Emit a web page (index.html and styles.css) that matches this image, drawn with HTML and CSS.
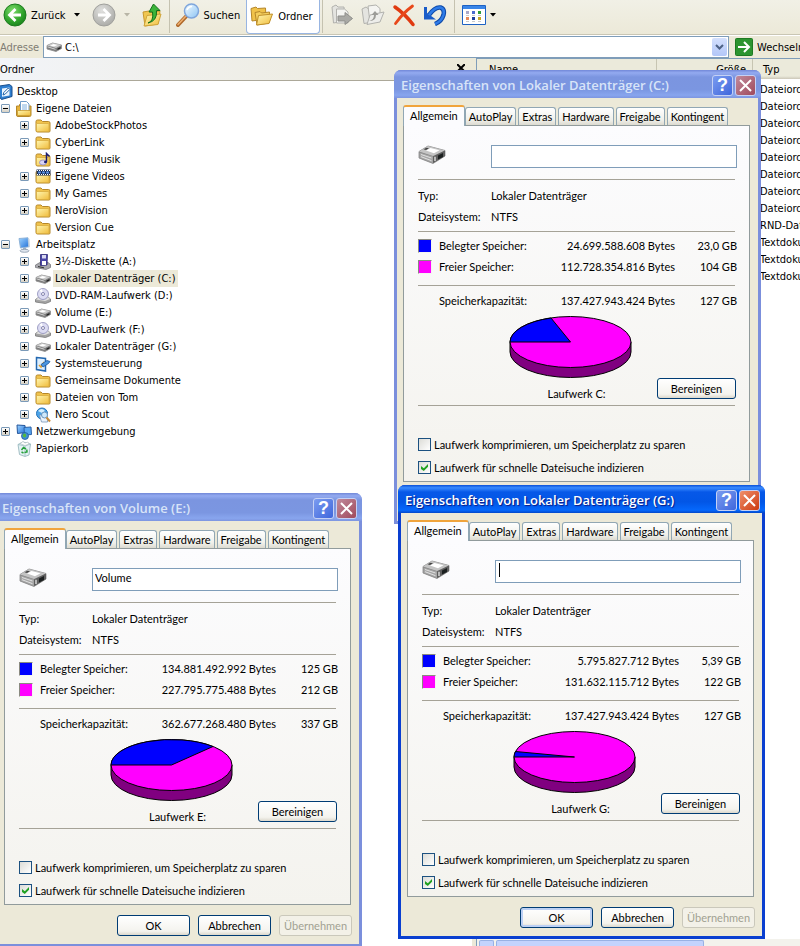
FILE: index.html
```html
<!DOCTYPE html>
<html lang="de">
<head>
    <meta charset="UTF-8">
    <meta name="viewport" content="width=device-width, initial-scale=1.0">
    <title>C:\</title>
    <link rel="stylesheet" href="styles.css">
</head>
<body>
    <!-- icon set -->
    <svg class="icon-defs" width="0" height="0" aria-hidden="true">
        <defs>
            <linearGradient id="g-folder" x1="0" y1="0" x2="1" y2="1">
                <stop offset="0" stop-color="#fff6b0"/>
                <stop offset="1" stop-color="#f0bc3c"/>
            </linearGradient>
            <radialGradient id="g-green" cx="0.4" cy="0.3" r="0.8">
                <stop offset="0" stop-color="#7fdc6c"/>
                <stop offset="0.6" stop-color="#2fa32b"/>
                <stop offset="1" stop-color="#157a18"/>
            </radialGradient>
            <radialGradient id="g-gray" cx="0.4" cy="0.3" r="0.8">
                <stop offset="0" stop-color="#e0e0de"/>
                <stop offset="1" stop-color="#a6a6a2"/>
            </radialGradient>
            <linearGradient id="g-screen" x1="0" y1="0" x2="1" y2="1">
                <stop offset="0" stop-color="#9fd4ff"/>
                <stop offset="1" stop-color="#1f6fd8"/>
            </linearGradient>
            <linearGradient id="g-glass" x1="0" y1="0" x2="1" y2="1">
                <stop offset="0" stop-color="#f4fcff"/>
                <stop offset="1" stop-color="#8cc4f4"/>
            </linearGradient>
        </defs>
        <symbol id="i-folder" viewBox="0 1 16 16">
            <path d="M1 4.500Q1 3 2.500 3H6l1.500 1.500h6Q15 4.500 15 6v8q0 1-1 1H2.500Q1 15 1 13.500z" fill="#f0c24c" stroke="#b5872a"/>
            <path d="M1.500 6.500h11.500q1 0 1 1v7H2.500q-1 0-1-1z" fill="url(#g-folder)" stroke="#d8ac40" stroke-width=".8"/>
        </symbol>
        <symbol id="i-documents" viewBox="0 0 16 16">
            <path d="M.5 5h3V3.500h9V5H15v9q0 1.500-1.500 1.500H2Q.5 15.500.5 14z" fill="#e8b33a" stroke="#b5872a"/>
            <path d="M4.500.5h6l2.500 2.500v8h-8.500z" fill="#fff" stroke="#6f9cc8"/>
            <path d="M6 4h5M6 6h5M6 8h5" stroke="#7fb0de"/>
            <path d="M1.500 9.500h13v5h-13z" fill="url(#g-folder)" stroke="#c89a2e" stroke-width=".8"/>
        </symbol>
        <symbol id="i-music" viewBox="0 0 16 16">
            <use href="#i-folder" width="16" height="16"/>
            <ellipse cx="8" cy="10.500" rx="3.500" ry="2.500" fill="#d9d4f4" stroke="#8d86c8" stroke-width=".8"/>
            <path d="M11.500 10V1.500l3 3" fill="none" stroke="#1c1c70" stroke-width="1.500"/>
            <ellipse cx="10.500" cy="10" rx="1.500" ry="1.200" fill="#1c1c70"/>
        </symbol>
        <symbol id="i-video" viewBox="0 0 16 16">
            <use href="#i-folder" width="16" height="16"/>
            <path d="M1.500.5H15.500v6H1.500z" fill="#1b2f55"/>
            <path d="M2 1.500h13.500M2 5.500h13.500" stroke="#fff" stroke-dasharray="1 1"/>
            <path d="M3 2.500h3v2H3zM7 2.500h3v2H7zM11 2.500h3v2h-3z" fill="#5a8fe0"/>
        </symbol>
        <symbol id="i-desktop" viewBox="0 0 16 16">
            <path d="M2.500 2l10-1.500 2.500 2v10L4.500 15.500 2.500 13z" fill="#2f7fd0" stroke="#174d8c"/>
            <path d="M5 4.500l7.500-1v8L5 12.800z" fill="#eaf5ff"/>
            <path d="M6 11l.8-2.500 4.500-4.500 1.500 1.500L8.300 10z" fill="#fff" stroke="#2163a8"/>
        </symbol>
        <symbol id="i-computer" viewBox="0 0 16 16">
            <path d="M3 1.500L12 .8l.8 9L4.500 11z" fill="url(#g-screen)" stroke="#8fb3d8"/>
            <path d="M12 1l1.500 1 .5 8-1.300.5z" fill="#c8d4e0"/>
            <path d="M7 11l3-.5.5 2.500H7z" fill="#9fb0c4"/>
            <ellipse cx="8.500" cy="13.800" rx="4.500" ry="1.500" fill="#dfe6ee" stroke="#8a99ab" stroke-width=".8"/>
        </symbol>
        <symbol id="i-drive" viewBox="0 0 16 16">
            <path d="M1 6.500L6.500 4l9 2v3.500L10 12.500 1 10z" fill="#7c7c7c" stroke="#8a8a8a" stroke-width=".8"/>
            <path d="M1 6.500L6.500 4l9 2-5.500 3z" fill="#c9c9c9"/>
            <path d="M4 6.500L7.500 5l4 .9-3.500 1.700z" fill="#fff"/>
            <path d="M1.500 7.800l8 2.500" stroke="#d4d4d4"/>
            <path d="M11.500 9.500l3-1.500v1.500l-3 1.500z" fill="#222"/>
        </symbol>
        <symbol id="i-drive-big" viewBox="0 0 28 20">
            <path d="M1 6.500L10 1l17 4.500V11L15 18.500 1 13z" fill="#858585" stroke="#888" stroke-width=".8"/>
            <path d="M1 6.500L10 1l17 4.500-12 5.500z" fill="#c4c4c4"/>
            <path d="M8 5.500L12.500 3l9 2.200-5.500 3z" fill="#fff"/>
            <path d="M5.500 4.300l3-1.600 2.500.6-3 1.600z" fill="#444"/>
            <path d="M1.500 7.500L15 11.500v6.500L1.500 12.800z" fill="#a5a5a5"/>
            <path d="M3 9.500l10.500 3.500M3 11.700l10.500 4" stroke="#e2e2e2"/>
            <path d="M15 11.500l12-6V11l-12 7z" fill="#5e5e5e"/>
            <path d="M20 10.500l5-2.500v4l-5 2.500z" fill="#1c2020"/>
            <path d="M17 11.800v4.200" stroke="#d8d8d8" stroke-width="1.500"/>
        </symbol>
        <symbol id="i-floppy" viewBox="0 0 16 16">
            <path d="M.5 11L5 8.500h8l2.500 2v3L11 15.500l-10.500-2z" fill="#a9a9ae" stroke="#77777c" stroke-width=".8"/>
            <path d="M5.500.5h7l-.5 10.500-6.500.5z" fill="#4b46a8" stroke="#2d2975" stroke-width=".8"/>
            <path d="M7 1h4v3.500H7z" fill="#d8d8f0"/>
            <path d="M7 7h4v4H7z" fill="#fff"/>
            <path d="M3 12.500l6 1.300" stroke="#333"/>
        </symbol>
        <symbol id="i-disc" viewBox="0 0 16 16">
            <path d="M.5 11.500L4 9h9l2.500 2v2.500L10.500 15.500.5 14z" fill="#a3a3a3" stroke="#777" stroke-width=".8"/>
            <path d="M1 11.500L4 9h9l2 2-5 2z" fill="#e0e0e0"/>
            <ellipse cx="8" cy="6" rx="5.500" ry="5.500" fill="#dcdcf2" stroke="#8c8cb8" stroke-width=".8"/>
            <path d="M8 6L4.500 2.500 7 1z" fill="#fff"/>
            <circle cx="8" cy="6" r="1.500" fill="#fff" stroke="#6a6a9c" stroke-width=".8"/>
        </symbol>
        <symbol id="i-control" viewBox="0 0 16 16">
            <path d="M1.500 1.500l9 1V15l-9-1.500z" fill="#dff0ff" stroke="#2468b0" stroke-width="1.500"/>
            <path d="M4 9l2 2 3-5" fill="none" stroke="#e0a030" stroke-width="1.500"/>
            <path d="M6 8.500l6-4 3 1-1.500 2L8 11z" fill="#4b96e0" stroke="#1d559c" stroke-width=".8"/>
        </symbol>
        <symbol id="i-scout" viewBox="0 0 16 16">
            <circle cx="7" cy="6.500" r="5.500" fill="#4aa3e8" stroke="#2873b8"/>
            <path d="M3 4q4-4 7 0l-3 2z" fill="#d5eeff"/>
            <path d="M4.500 8h8v7h-6z" fill="#eaf2fb" stroke="#7794b8" stroke-width=".8"/>
            <circle cx="9.500" cy="8" r="3" fill="#cfe8fb" stroke="#6a94bd"/>
            <path d="M11.500 10.500l3.500 4" stroke="#c88a3a" stroke-width="2"/>
        </symbol>
        <symbol id="i-network" viewBox="0 0 16 16">
            <path d="M1 1l8 .5.500 7-8 1z" fill="url(#g-screen)" stroke="#24569c"/>
            <path d="M8 3.500l7-.5.500 7.500-7 .5z" fill="#57a6f0" stroke="#2c62a8"/>
            <circle cx="9" cy="12" r="3.500" fill="#3c8fd8" stroke="#1f5a98" stroke-width=".8"/>
            <path d="M7 10.500q2-2 3 0t-1 3q-3-.5-2-3z" fill="#54b83e"/>
        </symbol>
        <symbol id="i-bin" viewBox="0 0 16 16">
            <path d="M2 3.500l5-2.500 7.500 2L13 14l-4 1.500-5.500-2z" fill="#e4f2f4" stroke="#8fb0b8" stroke-width=".8"/>
            <path d="M2 3.500l7 1.500 5.500-2M9 5v10" fill="none" stroke="#9fbec4" stroke-width=".8"/>
            <path d="M4 2.500l3-2 2 1.500 3-1 1 2-4 1.500z" fill="#fff" stroke="#a8b8bc" stroke-width=".6"/>
            <path d="M5.500 9l2-2.500 2.500 1.500M10.800 8.500L11 11l-2.500.5M7.500 12l-2-1" fill="none" stroke="#26a03a" stroke-width="1.500"/>
        </symbol>
        <symbol id="i-back" viewBox="0 0 24 24">
            <circle cx="12" cy="12" r="11" fill="url(#g-green)" stroke="#1c7c1e"/>
            <path d="M12.500 6L6.500 12l6 6M7 12h11" fill="none" stroke="#fff" stroke-width="2.800"/>
        </symbol>
        <symbol id="i-forward" viewBox="0 0 24 24">
            <circle cx="12" cy="12" r="11" fill="url(#g-gray)" stroke="#a0a09c"/>
            <path d="M11.500 6l6 6-6 6M17 12H6" fill="none" stroke="#fff" stroke-width="2.800"/>
        </symbol>
        <symbol id="i-up" viewBox="0 0 20 24">
            <path d="M1 9l6-1 1.500 1.500L18 8l-2 13-13 2z" fill="#f0c650" stroke="#c8982e"/>
            <path d="M5 12.500l14-1.500-3 10.500L2 23z" fill="url(#g-folder)" stroke="#d0a43a"/>
            <path d="M6 20q6-2 4.500-11H7L11.500 1 18 7.500h-3.500Q15.500 18 6 20z" fill="#3cb43a" stroke="#14701a"/>
        </symbol>
        <symbol id="i-search" viewBox="0 0 24 24">
            <path d="M2 22l8-8.500" stroke="#b06a2c" stroke-width="4" stroke-linecap="round"/>
            <path d="M2 21.500l7.500-8" stroke="#eeb070" stroke-width="1.500" stroke-linecap="round"/>
            <circle cx="15.500" cy="8" r="7" fill="url(#g-glass)" stroke="#7fa6dc" stroke-width="1.500"/>
            <path d="M11 7q1.500-3.500 5-3.500" fill="none" stroke="#fff" stroke-width="1.500"/>
        </symbol>
        <symbol id="i-folders" viewBox="0 0 24 20">
            <path d="M1 2.500L6 1l1.500 1.500 8-.5.500 11L2 15z" fill="#f0c24a" stroke="#b5872a"/>
            <path d="M5 6.500l5-1 1.500 1.500 8-1-.5 11-12 2z" fill="#f3cd5c" stroke="#b5872a"/>
            <path d="M8.500 9.500L22.500 8l-3.500 9.500L6.500 19z" fill="url(#g-folder)" stroke="#c0902a"/>
        </symbol>
        <symbol id="i-move" viewBox="0 0 24 22">
            <path d="M2 3l4-2 2 2h6l.5 14-11 2z" fill="#e4e4e0" stroke="#b2b2ae"/>
            <path d="M6.500 5h8L18 8v11H6.500z" fill="#f4f4f1" stroke="#b2b2ae"/>
            <path d="M8 12h7V8.500l7.500 6-7.500 6V17H8z" fill="#a9a9a5" stroke="#8f8f8b"/>
        </symbol>
        <symbol id="i-copy" viewBox="0 0 24 22">
            <path d="M1 5l4-2 2 1.500h5V18l-9 1.500z" fill="#e4e4e0" stroke="#b2b2ae"/>
            <path d="M7 2l8-1 4 3.500v12l-10 2z" fill="#f4f4f1" stroke="#b2b2ae"/>
            <path d="M9 11l14-3-4 10-13 2.500z" fill="#ededea" stroke="#b2b2ae"/>
            <path d="M8 17q5-1 5-6h-2.500L14 7l3.500 4H15q0 6-7 6z" fill="#9c9c98"/>
        </symbol>
        <symbol id="i-delete" viewBox="0 0 24 24">
            <path d="M3 4Q13 11 21 21.500" fill="none" stroke="#e03a10" stroke-width="3.500" stroke-linecap="round"/>
            <path d="M20.500 3Q11 10 3.500 20.500" fill="none" stroke="#e8481a" stroke-width="2.800" stroke-linecap="round"/>
        </symbol>
        <symbol id="i-undo" viewBox="0 0 24 22">
            <path d="M6 11Q12 2.500 17.500 3.500 22 5 20.500 11 18.500 17.500 12 20" fill="none" stroke="#0f4aa8" stroke-width="4.500"/>
            <path d="M1 3l3 0v6l9 6.500H1z" fill="#1a5cc8"/>
            <path d="M6 11Q12 2.500 17.500 3.500 22 5 20.500 11 18.500 17.500 12 20" fill="none" stroke="#2f7ce8" stroke-width="2.500"/>
        </symbol>
        <symbol id="i-views" viewBox="0 0 24 20">
            <path d="M.5.5h23v19H.5z" fill="#fff" stroke="#1d62c4"/>
            <path d="M1 1h22v3H1z" fill="#3a86e8"/>
            <path d="M4 6h3v3H4z" fill="#a9a9c9"/><path d="M10 6h3v3h-3z" fill="#4a6ad0"/><path d="M16 6h3v3h-3z" fill="#2e9c3c"/>
            <path d="M4 12h3v3H4z" fill="#e88a5a"/><path d="M10 12h3v3h-3z" fill="#1d3f9c"/><path d="M16 12h3v3h-3z" fill="#c8a424"/>
            <path d="M4 10.500h3M10 10.500h3M16 10.500h3M4 16.500h3M10 16.500h3M16 16.500h3" stroke="#c9c9c9"/>
        </symbol>
        <symbol id="i-go" viewBox="0 0 18 18">
            <rect x=".5" y=".5" width="17" height="17" rx="1" fill="#2c9430" stroke="#1d7a22"/>
            <path d="M9 4l5 5-5 5M13.500 9H3" fill="none" stroke="#fff" stroke-width="2"/>
        </symbol>
        <symbol id="i-caret" viewBox="0 0 6 4">
            <path d="M0 0h6L3 3.500z" fill="currentColor"/>
        </symbol>
    </svg>

    <main class="explorer">
        <div class="toolbar">
            <button class="tool"><svg width="24" height="24"><use href="#i-back"/></svg>Zurück</button>
            <button class="tool-arrow" aria-label="Zurück Verlauf"><svg width="6" height="4"><use href="#i-caret"/></svg></button>
            <button class="tool forward" aria-label="Vorwärts"><svg width="24" height="24"><use href="#i-forward"/></svg></button>
            <button class="tool-arrow disabled" aria-label="Vorwärts Verlauf"><svg width="6" height="4"><use href="#i-caret"/></svg></button>
            <button class="tool up" aria-label="Aufwärts"><svg width="20" height="24"><use href="#i-up"/></svg></button>
            <span class="separator"></span>
            <button class="tool search"><svg width="24" height="24"><use href="#i-search"/></svg>Suchen</button>
            <button class="tool pressed"><svg width="24" height="20"><use href="#i-folders"/></svg>Ordner</button>
            <span class="separator after-pressed"></span>
            <div class="tool-group">
                <button class="tool" aria-label="Verschieben nach"><svg width="24" height="22"><use href="#i-move"/></svg></button>
                <button class="tool" aria-label="Kopieren nach"><svg width="24" height="22"><use href="#i-copy"/></svg></button>
                <button class="tool" aria-label="Löschen"><svg width="24" height="24"><use href="#i-delete"/></svg></button>
                <button class="tool" aria-label="Rückgängig"><svg width="24" height="22"><use href="#i-undo"/></svg></button>
            </div>
            <span class="separator"></span>
            <button class="tool views" aria-label="Ansichten"><svg width="24" height="20"><use href="#i-views"/></svg><svg width="6" height="4"><use href="#i-caret"/></svg></button>
        </div>

        <div class="address-bar">
            <label for="address">Adresse</label>
            <div class="address-field">
                <svg width="16" height="16"><use href="#i-drive"/></svg>
                <input type="text" id="address" value="C:\">
                <button class="drop" aria-label="Adressliste"><svg width="9" height="6" viewBox="0 0 9 6"><path d="M1 1l3.500 3.500L8 1" fill="none" stroke="#4d6185" stroke-width="2"/></svg></button>
            </div>
            <button class="go"><svg width="18" height="18"><use href="#i-go"/></svg>Wechseln zu</button>
        </div>

        <div class="panes">
            <aside class="tree-pane">
                <div class="pane-header">
                    <span>Ordner</span>
                    <button class="pane-close" aria-label="Schließen"><svg width="8" height="8" viewBox="0 0 8 8"><path d="M0 0l8 8M8 0L0 8" stroke="#000" stroke-width="2"/></svg></button>
                </div>
                <ul class="tree">
                    <li class="root"><svg class="icon"><use href="#i-desktop"/></svg><span>Desktop</span></li>
                    <li class="level1"><i class="box minus"></i><svg class="icon"><use href="#i-documents"/></svg><span>Eigene Dateien</span></li>
                    <li class="level2"><i class="box"></i><svg class="icon"><use href="#i-folder"/></svg><span>AdobeStockPhotos</span></li>
                    <li class="level2"><i class="box"></i><svg class="icon"><use href="#i-folder"/></svg><span>CyberLink</span></li>
                    <li class="level2"><i class="box none"></i><svg class="icon"><use href="#i-music"/></svg><span>Eigene Musik</span></li>
                    <li class="level2"><i class="box"></i><svg class="icon"><use href="#i-video"/></svg><span>Eigene Videos</span></li>
                    <li class="level2"><i class="box"></i><svg class="icon"><use href="#i-folder"/></svg><span>My Games</span></li>
                    <li class="level2"><i class="box"></i><svg class="icon"><use href="#i-folder"/></svg><span>NeroVision</span></li>
                    <li class="level2"><i class="box none"></i><svg class="icon"><use href="#i-folder"/></svg><span>Version Cue</span></li>
                    <li class="level1"><i class="box minus"></i><svg class="icon"><use href="#i-computer"/></svg><span>Arbeitsplatz</span></li>
                    <li class="level2"><i class="box"></i><svg class="icon"><use href="#i-floppy"/></svg><span>3½-Diskette (A:)</span></li>
                    <li class="level2 selected"><i class="box"></i><svg class="icon"><use href="#i-drive"/></svg><span>Lokaler Datenträger (C:)</span></li>
                    <li class="level2"><i class="box"></i><svg class="icon"><use href="#i-disc"/></svg><span>DVD-RAM-Laufwerk (D:)</span></li>
                    <li class="level2"><i class="box"></i><svg class="icon"><use href="#i-drive"/></svg><span>Volume (E:)</span></li>
                    <li class="level2"><i class="box"></i><svg class="icon"><use href="#i-disc"/></svg><span>DVD-Laufwerk (F:)</span></li>
                    <li class="level2"><i class="box"></i><svg class="icon"><use href="#i-drive"/></svg><span>Lokaler Datenträger (G:)</span></li>
                    <li class="level2"><i class="box"></i><svg class="icon"><use href="#i-control"/></svg><span>Systemsteuerung</span></li>
                    <li class="level2"><i class="box"></i><svg class="icon"><use href="#i-folder"/></svg><span>Gemeinsame Dokumente</span></li>
                    <li class="level2"><i class="box"></i><svg class="icon"><use href="#i-folder"/></svg><span>Dateien von Tom</span></li>
                    <li class="level2"><i class="box"></i><svg class="icon"><use href="#i-scout"/></svg><span>Nero Scout</span></li>
                    <li class="level1"><i class="box"></i><svg class="icon"><use href="#i-network"/></svg><span>Netzwerkumgebung</span></li>
                    <li class="level1"><i class="box none"></i><svg class="icon"><use href="#i-bin"/></svg><span>Papierkorb</span></li>
                </ul>
            </aside>
            <div class="splitter"></div>
            <section class="list-pane">
                <div class="list-header">
                    <span class="col-name">Name</span>
                    <span class="col-size">Größe</span>
                    <span class="col-type">Typ</span>
                </div>
                <ul class="list">
                    <li>Dateiordner</li>
                    <li>Dateiordner</li>
                    <li>Dateiordner</li>
                    <li>Dateiordner</li>
                    <li>Dateiordner</li>
                    <li>Dateiordner</li>
                    <li>Dateiordner</li>
                    <li>Dateiordner</li>
                    <li>RND-Datei</li>
                    <li>Textdokument</li>
                    <li>Textdokument</li>
                    <li>Textdokument</li>
                </ul>
                <div class="scrollbar">
                    <span class="scroll-button"></span>
                    <span class="scroll-thumb"></span>
                </div>
            </section>
        </div>
    </main>

    <!-- Volume C -->
    <section class="dialog dialog-c">
        <header class="titlebar">
            <h2>Eigenschaften von Lokaler Datenträger (C:)</h2>
            <button class="help" aria-label="Hilfe">?</button>
            <button class="close" aria-label="Schließen"><svg width="13" height="13" viewBox="0 0 13 13"><path d="M1 1l11 11M12 1L1 12" stroke="#fff" stroke-width="2"/></svg></button>
        </header>
        <div class="dialog-body">
            <div class="tabs">
                <button class="tab active">Allgemein</button>
                <button class="tab">AutoPlay</button>
                <button class="tab">Extras</button>
                <button class="tab">Hardware</button>
                <button class="tab">Freigabe</button>
                <button class="tab">Kontingent</button>
            </div>
            <div class="panel">
                <div class="name-row">
                    <svg width="28" height="20"><use href="#i-drive-big"/></svg>
                    <input type="text" aria-label="Name C:" value="">
                </div>
                <hr>
                <dl class="info">
                    <dt>Typ:</dt><dd>Lokaler Datenträger</dd>
                    <dt>Dateisystem:</dt><dd>NTFS</dd>
                </dl>
                <hr>
                <table class="space">
                    <tr><th><i class="swatch used"></i>Belegter Speicher:</th><td>24.699.588.608 Bytes</td><td>23,0 GB</td></tr>
                    <tr><th><i class="swatch free"></i>Freier Speicher:</th><td>112.728.354.816 Bytes</td><td>104 GB</td></tr>
                </table>
                <hr>
                <table class="space total">
                    <tr><th>Speicherkapazität:</th><td>137.427.943.424 Bytes</td><td>127 GB</td></tr>
                </table>
                <div class="chart">
                    <svg class="pie" width="123" height="63" viewBox="0 0 123 63">
                        <path class="side" d="M1 26v10a60.500 25.500 0 0 0 121 0V26z"/>
                        <ellipse class="top" cx="61.500" cy="26" rx="60.500" ry="25.500"/>
                        <path class="slice" d="M61.500 26H1A60.500 25.500 0 0 1 42 2z"/>
                    </svg>
                    <div class="chart-label">Laufwerk C:</div>
                    <button class="btn cleanup">Bereinigen</button>
                </div>
                <hr>
                <div class="options">
                    <label><input type="checkbox">Laufwerk komprimieren, um Speicherplatz zu sparen</label>
                    <label><input type="checkbox" checked>Laufwerk für schnelle Dateisuche indizieren</label>
                </div>
            </div>
            <footer class="actions">
                <button class="btn">OK</button>
                <button class="btn">Abbrechen</button>
                <button class="btn" disabled>Übernehmen</button>
            </footer>
        </div>
    </section>

    <!-- Volume E -->
    <section class="dialog dialog-e">
        <header class="titlebar">
            <h2>Eigenschaften von Volume (E:)</h2>
            <button class="help" aria-label="Hilfe">?</button>
            <button class="close" aria-label="Schließen"><svg width="13" height="13" viewBox="0 0 13 13"><path d="M1 1l11 11M12 1L1 12" stroke="#fff" stroke-width="2"/></svg></button>
        </header>
        <div class="dialog-body">
            <div class="tabs">
                <button class="tab active">Allgemein</button>
                <button class="tab">AutoPlay</button>
                <button class="tab">Extras</button>
                <button class="tab">Hardware</button>
                <button class="tab">Freigabe</button>
                <button class="tab">Kontingent</button>
            </div>
            <div class="panel">
                <div class="name-row">
                    <svg width="28" height="20"><use href="#i-drive-big"/></svg>
                    <input type="text" aria-label="Name E:" value="Volume">
                </div>
                <hr>
                <dl class="info">
                    <dt>Typ:</dt><dd>Lokaler Datenträger</dd>
                    <dt>Dateisystem:</dt><dd>NTFS</dd>
                </dl>
                <hr>
                <table class="space">
                    <tr><th><i class="swatch used"></i>Belegter Speicher:</th><td>134.881.492.992 Bytes</td><td>125 GB</td></tr>
                    <tr><th><i class="swatch free"></i>Freier Speicher:</th><td>227.795.775.488 Bytes</td><td>212 GB</td></tr>
                </table>
                <hr>
                <table class="space total">
                    <tr><th>Speicherkapazität:</th><td>362.677.268.480 Bytes</td><td>337 GB</td></tr>
                </table>
                <div class="chart">
                    <svg class="pie" width="123" height="63" viewBox="0 0 123 63">
                        <path class="side" d="M1 26v10a60.500 25.500 0 0 0 121 0V26z"/>
                        <ellipse class="top" cx="61.500" cy="26" rx="60.500" ry="25.500"/>
                        <path class="slice" d="M61.500 26H1A60.500 25.500 0 0 1 103 7.500z"/>
                    </svg>
                    <div class="chart-label">Laufwerk E:</div>
                    <button class="btn cleanup">Bereinigen</button>
                </div>
                <hr>
                <div class="options">
                    <label><input type="checkbox">Laufwerk komprimieren, um Speicherplatz zu sparen</label>
                    <label><input type="checkbox" checked>Laufwerk für schnelle Dateisuche indizieren</label>
                </div>
            </div>
            <footer class="actions">
                <button class="btn">OK</button>
                <button class="btn">Abbrechen</button>
                <button class="btn" disabled>Übernehmen</button>
            </footer>
        </div>
    </section>

    <!-- Volume G, has the focus -->
    <section class="dialog dialog-g focused">
        <header class="titlebar">
            <h2>Eigenschaften von Lokaler Datenträger (G:)</h2>
            <button class="help" aria-label="Hilfe">?</button>
            <button class="close" aria-label="Schließen"><svg width="13" height="13" viewBox="0 0 13 13"><path d="M1 1l11 11M12 1L1 12" stroke="#fff" stroke-width="2"/></svg></button>
        </header>
        <div class="dialog-body">
            <div class="tabs">
                <button class="tab active">Allgemein</button>
                <button class="tab">AutoPlay</button>
                <button class="tab">Extras</button>
                <button class="tab">Hardware</button>
                <button class="tab">Freigabe</button>
                <button class="tab">Kontingent</button>
            </div>
            <div class="panel">
                <div class="name-row">
                    <svg width="28" height="20"><use href="#i-drive-big"/></svg>
                    <input class="with-caret" type="text" aria-label="Name G:" value="">
                </div>
                <hr>
                <dl class="info">
                    <dt>Typ:</dt><dd>Lokaler Datenträger</dd>
                    <dt>Dateisystem:</dt><dd>NTFS</dd>
                </dl>
                <hr>
                <table class="space">
                    <tr><th><i class="swatch used"></i>Belegter Speicher:</th><td>5.795.827.712 Bytes</td><td>5,39 GB</td></tr>
                    <tr><th><i class="swatch free"></i>Freier Speicher:</th><td>131.632.115.712 Bytes</td><td>122 GB</td></tr>
                </table>
                <hr>
                <table class="space total">
                    <tr><th>Speicherkapazität:</th><td>137.427.943.424 Bytes</td><td>127 GB</td></tr>
                </table>
                <div class="chart">
                    <svg class="pie" width="123" height="63" viewBox="0 0 123 63">
                        <path class="side" d="M1 26v10a60.500 25.500 0 0 0 121 0V26z"/>
                        <ellipse class="top" cx="61.500" cy="26" rx="60.500" ry="25.500"/>
                        <path class="slice" d="M61.500 26H1A60.500 25.500 0 0 1 2.500 20.500z"/>
                    </svg>
                    <div class="chart-label">Laufwerk G:</div>
                    <button class="btn cleanup">Bereinigen</button>
                </div>
                <hr>
                <div class="options">
                    <label><input type="checkbox">Laufwerk komprimieren, um Speicherplatz zu sparen</label>
                    <label><input type="checkbox" checked>Laufwerk für schnelle Dateisuche indizieren</label>
                </div>
            </div>
            <footer class="actions">
                <button class="btn default">OK</button>
                <button class="btn">Abbrechen</button>
                <button class="btn" disabled>Übernehmen</button>
            </footer>
        </div>
    </section>
</body>
</html>
```
FILE: styles.css
```css
* {
    box-sizing: border-box;
}
body {
    margin: 0;
    height: 100vh;
    overflow: hidden;
    position: relative;
    background-color: #fff;
    color: #000;
    font-family: "DejaVu Sans Condensed", "DejaVu Sans", sans-serif;
    font-size: 11px;
    line-height: 17px;
    white-space: nowrap;
}
button, input {
    font: inherit;
    color: inherit;
    margin: 0;
    padding: 0;
}
button {
    border: none;
    background: none;
    white-space: nowrap;
}
svg {
    display: block;
    flex: none;
}
ul, dl, dd, h2 {
    margin: 0;
    padding: 0;
    list-style: none;
}
.icon-defs {
    position: absolute;
}

/* explorer window */
.explorer {
    display: flex;
    flex-direction: column;
    height: 100%;
}
.toolbar {
    display: flex;
    align-items: flex-start;
    height: 35px;
    padding-left: 3px;
    background: linear-gradient(#f1f0e6, #ece9d8);
    border-bottom: 1px solid #c9c6b4;
}
.tool, .tool-arrow {
    display: flex;
    align-items: center;
    gap: 4px;
    height: 30px;
}
.tool-arrow {
    margin-left: 8px;
}
.tool-arrow.disabled {
    color: #b8b5a6;
}
.forward, .up {
    margin-left: 12px;
}
.separator {
    width: 1px;
    height: 33px;
    margin-left: 7px;
    background-color: #c5c2b0;
}
.search {
    margin-left: 6px;
}
.pressed {
    height: 34px;
    margin-left: 6px;
    padding: 0 6px 1px 3px;
    background-color: #fff;
    border: 1px solid #98b5e2;
    border-top: none;
    border-radius: 0 0 4px 4px;
}
.separator.after-pressed {
    margin-left: 2px;
}
.tool-group {
    display: flex;
    gap: 7px;
    margin-left: 7px;
}
.views {
    margin-left: 7px;
}
.address-bar {
    display: flex;
    align-items: center;
    height: 23px;
    background-color: #ece9d8;
    border-top: 1px solid #fff;
}
.address-bar label {
    width: 43px;
    color: #7f7c73;
}
.address-field {
    display: flex;
    align-items: center;
    flex: 1;
    height: 22px;
    padding: 0 1px 0 2px;
    background-color: #fff;
    border: 1px solid #7f9db9;
}
.address-field input {
    flex: 1;
    min-width: 0;
    margin-left: 3px;
    border: none;
    outline: none;
}
.drop {
    display: flex;
    align-items: center;
    justify-content: center;
    width: 15px;
    height: 18px;
    background: linear-gradient(#d4e0fd, #b3c7f8);
    border-radius: 2px;
}
.go {
    display: flex;
    align-items: center;
    gap: 4px;
    width: 65px;
    margin-left: 6px;
}
.panes {
    display: flex;
    flex: 1;
    min-height: 0;
}
.tree-pane {
    width: 472px;
}
.pane-header {
    display: flex;
    align-items: center;
    justify-content: space-between;
    height: 23px;
    padding-right: 7px;
    background: linear-gradient(to right, #f2f4f8, #ece9d8);
    border-bottom: 1px solid #aca899;
}
.pane-close {
    padding-bottom: 2px;
}
.tree {
    padding-top: 2px;
}
.tree li {
    display: flex;
    align-items: center;
    height: 17px;
}
.tree span {
    padding: 0 2px;
    margin-left: 2px;
}
.tree .icon {
    width: 16px;
    height: 16px;
}
.root {
    margin-left: -3px;
}
.level1 {
    padding-left: 1px;
}
.level2 {
    padding-left: 20px;
}
.selected span {
    background-color: #ece9d8;
}
.box {
    width: 9px;
    height: 9px;
    margin-right: 6px;
    border: 1px solid #7b9ab8;
    border-radius: 1px;
    background:
        linear-gradient(#000, #000) center / 5px 1px no-repeat,
        linear-gradient(#000, #000) center / 1px 5px no-repeat,
        linear-gradient(#fff, #d5d0c4);
}
.box.minus {
    background:
        linear-gradient(#000, #000) center / 5px 1px no-repeat,
        linear-gradient(#fff, #d5d0c4);
}
.box.none {
    visibility: hidden;
}
.splitter {
    width: 4px;
    background-color: #ece9d8;
}
.list-pane {
    display: flex;
    flex-direction: column;
    flex: 1;
    min-width: 0;
    overflow: hidden;
    border-left: 1px solid #7f9db9;
    border-top: 1px solid #7f9db9;
}
.list-header {
    display: flex;
    height: 20px;
    line-height: 22px;
    background: linear-gradient(#ebeadb 85%, #cbc7b8);
}
.col-name {
    width: 180px;
    padding-left: 12px;
    border-right: 1px solid #c7c5b2;
}
.col-size {
    width: 96px;
    padding-right: 6px;
    text-align: right;
    border-right: 1px solid #c7c5b2;
}
.col-type {
    padding-left: 10px;
}
.list {
    flex: 1;
    padding-left: 283px;
    padding-top: 2px;
}
.scrollbar {
    display: flex;
    gap: 2px;
    height: 7px;
    padding: 1px 0 0 2px;
    background-color: #f3f2ec;
}
.scroll-button, .scroll-thumb {
    width: 15px;
    background-color: #c3d3fd;
    border: 1px solid #98b1e4;
    border-bottom: none;
    border-radius: 2px 2px 0 0;
}
.scroll-thumb {
    width: 208px;
}

/* property dialogs */
.dialog {
    position: absolute;
    width: 367px;
    border: 3px solid #7b8fdc;
    border-top: none;
    border-radius: 7px 7px 0 0;
    background-color: #7b8fdc;
    font-family: Lato, "Liberation Sans", sans-serif;
    line-height: 13px;
}
.dialog-c {
    left: 394px;
    top: 70px;
}
.dialog-e {
    left: -5px;
    top: 493px;
}
.dialog-g {
    left: 398px;
    top: 485px;
}
.titlebar {
    display: flex;
    align-items: center;
    gap: 2px;
    height: 28px;
    margin: 0 -3px;
    padding: 2px 5px 0 7px;
    border-radius: 7px 7px 0 0;
    background: linear-gradient(#7288d8, #93aaf0 10%, #7b95e0 25%, #7b96e1 70%, #88a5ee 90%, #7d95e0);
}
.titlebar h2 {
    flex: 1;
    font-family: "Open Sans", sans-serif;
    font-size: 13px;
    font-weight: 600;
    line-height: 18px;
    color: #d8e4f8;
}
.help, .close {
    display: flex;
    align-items: center;
    justify-content: center;
    width: 21px;
    height: 21px;
    border: 1px solid #c5d1f5;
    border-radius: 3px;
    background: linear-gradient(135deg, #7b9cf0, #3f66dc);
    color: #fff;
    font-family: "Liberation Sans", sans-serif;
    font-size: 18px;
    font-weight: bold;
}
.close {
    background: linear-gradient(135deg, #c08a9c, #a04a5c);
}
.focused, .focused .titlebar {
    border-color: #0a3fd0;
}
.focused {
    background-color: #0a3fd0;
}
.focused .titlebar {
    background: linear-gradient(#0a50d8, #3a8cff 10%, #0758e8 25%, #0256e6 60%, #0568fc 90%, #0348c8);
}
.focused .titlebar h2 {
    color: #fff;
    text-shadow: 1px 1px 1px #0a1883;
}
.focused .close {
    background: linear-gradient(135deg, #f0906c, #cc3a10);
}
.dialog-body {
    padding: 7px 7px 8px 6px;
    background-color: #ece9d8;
}
.tabs {
    display: flex;
    align-items: flex-end;
    gap: 2px;
    height: 20px;
}
.tab {
    height: 18px;
    padding: 0 3px;
    background: linear-gradient(#fff, #f0f0ea 70%, #dcdad0);
    border: 1px solid #91a7b4;
    border-bottom: none;
    border-radius: 3px 3px 0 0;
}
.tab.active {
    position: relative;
    height: 21px;
    margin-bottom: -1px;
    margin-right: -2px;
    padding: 0 6px 3px;
    background: #fcfcfe;
    border-top: 2px solid #f0a43c;
}
.panel {
    margin-right: 1px;
    padding: 19px 12px 7px 14px;
    background: linear-gradient(#fcfcfe, #f4f3ee);
    border: 1px solid #919b9c;
}
.panel hr {
    height: 1px;
    margin: 0 2px 0 0;
    border: none;
    background-color: #a5a297;
}
.name-row {
    display: flex;
    justify-content: space-between;
    margin-bottom: 11px;
}
.name-row input {
    width: 246px;
    height: 23px;
    padding: 0 2px 4px;
    background-color: #fff;
    border: 1px solid #7f9db9;
    outline: none;
}
.name-row .with-caret {
    background: #fff linear-gradient(#000, #000) 3px 2px / 1px 14px no-repeat;
}
.info {
    display: grid;
    grid-template-columns: 73px 1fr;
    line-height: 21px;
    padding: 5px 0 4px;
}
.space {
    width: 100%;
    margin: 3px 0 8px;
    border-spacing: 0;
    line-height: 21px;
}
.space th, .space td {
    padding: 0;
    font-weight: normal;
    text-align: right;
}
.space th {
    display: flex;
    align-items: center;
    gap: 7px;
    text-align: left;
}
.space td:last-child {
    width: 62px;
}
.space.total {
    margin: 4px 0 5px;
}
.space.total th {
    padding-left: 21px;
}
.swatch {
    width: 14px;
    height: 14px;
    border: 1px solid;
    border-color: #8a8a80 #f4f4f0 #f4f4f0 #8a8a80;
    background-color: #00f;
}
.swatch.free {
    background-color: #f0f;
}
.chart {
    display: grid;
    grid-template-columns: 91px 123px 1fr;
    grid-template-rows: 62px 27px;
}
.pie {
    grid-column: 2;
}
.pie path, .pie ellipse {
    stroke: #000;
}
.pie .side {
    fill: #800080;
}
.pie .top {
    fill: #f0f;
}
.pie .slice {
    fill: #00f;
}
.chart-label {
    grid-column: 2;
    grid-row: 2;
    align-self: end;
    padding: 0 0 5px 12px;
    text-align: center;
}
.cleanup {
    grid-column: 3;
    grid-row: 2;
    justify-self: end;
    margin-right: 1px;
}
.btn {
    width: 73px;
    height: 21px;
    background: linear-gradient(#fff, #f4f3ee 80%, #dcd8cc);
    border: 1px solid #003c74;
    border-radius: 3px;
}
.btn.cleanup {
    width: 79px;
}
.btn.default {
    box-shadow: inset 0 0 0 2px #bcd0f4;
}
.btn:disabled {
    color: #a1a192;
    background: #f3f1e8;
    border-color: #cac8bb;
}
.options {
    display: flex;
    flex-direction: column;
    gap: 10px;
    padding-top: 32px;
}
.options label {
    display: flex;
    align-items: center;
    gap: 3px;
}
.options input {
    appearance: none;
    display: flex;
    align-items: center;
    justify-content: center;
    width: 13px;
    height: 13px;
    border: 1px solid #1c5180;
    background: linear-gradient(135deg, #dcdcd7, #fff);
}
.options input:checked::before {
    content: "";
    width: 7px;
    height: 7px;
    background-color: #21a121;
    clip-path: polygon(0 28%, 40% 60%, 100% 0, 100% 40%, 40% 100%, 0 70%);
}
.actions {
    display: flex;
    justify-content: flex-end;
    gap: 8px;
    padding-top: 10px;
}
```
